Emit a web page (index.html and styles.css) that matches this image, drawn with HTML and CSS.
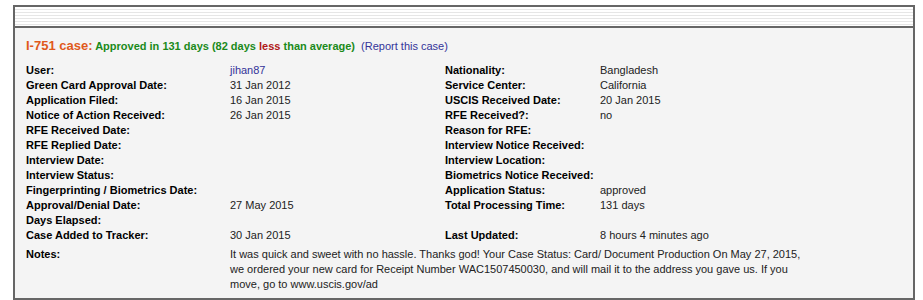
FILE: index.html
```html
<!DOCTYPE html>
<html>
<head>
<meta charset="utf-8">
<link rel="stylesheet" href="styles.css">
</head>
<body>
<div class="box">
  <div class="stripes"></div>
  <div class="content">
    <div class="title">
      <span class="case">I-751 case:</span>
      <span class="status">Approved in 131 days (82 days <span class="less">less</span> than average)</span>
      <a class="report" href="#">(Report this case)</a>
    </div>
    <div class="grid">
      <div class="lbl">User:</div><div class="val"><a class="user" href="#">jihan87</a></div>
      <div class="lbl">Nationality:</div><div class="val">Bangladesh</div>

      <div class="lbl">Green Card Approval Date:</div><div class="val">31 Jan 2012</div>
      <div class="lbl">Service Center:</div><div class="val">California</div>

      <div class="lbl">Application Filed:</div><div class="val">16 Jan 2015</div>
      <div class="lbl">USCIS Received Date:</div><div class="val">20 Jan 2015</div>

      <div class="lbl">Notice of Action Received:</div><div class="val">26 Jan 2015</div>
      <div class="lbl">RFE Received?:</div><div class="val">no</div>

      <div class="lbl">RFE Received Date:</div><div class="val"></div>
      <div class="lbl">Reason for RFE:</div><div class="val"></div>

      <div class="lbl">RFE Replied Date:</div><div class="val"></div>
      <div class="lbl">Interview Notice Received:</div><div class="val"></div>

      <div class="lbl">Interview Date:</div><div class="val"></div>
      <div class="lbl">Interview Location:</div><div class="val"></div>

      <div class="lbl">Interview Status:</div><div class="val"></div>
      <div class="lbl">Biometrics Notice Received:</div><div class="val"></div>

      <div class="lbl">Fingerprinting / Biometrics Date:</div><div class="val"></div>
      <div class="lbl">Application Status:</div><div class="val">approved</div>

      <div class="lbl">Approval/Denial Date:</div><div class="val">27 May 2015</div>
      <div class="lbl">Total Processing Time:</div><div class="val">131 days</div>

      <div class="lbl">Days Elapsed:</div><div class="val"></div>
      <div class="lbl"></div><div class="val"></div>

      <div class="lbl">Case Added to Tracker:</div><div class="val">30 Jan 2015</div>
      <div class="lbl">Last Updated:</div><div class="val">8 hours 4 minutes ago</div>

      <div class="lbl notes-lbl">Notes:</div>
      <div class="val notes">It was quick and sweet with no hassle. Thanks god! Your Case Status: Card/ Document Production On May 27, 2015, we ordered your new card for Receipt Number WAC1507450030, and will mail it to the address you gave us. If you move, go to www.uscis.gov/ad</div>
    </div>
  </div>
</div>
</body>
</html>
```
FILE: styles.css
```css
html, body {
  margin: 0;
  padding: 0;
  background: #ffffff;
}
body {
  font-family: "Liberation Sans", Arial, sans-serif;
  font-size: 11px;
  color: #222;
}
.box {
  margin: 5px 0 0 13px;
  width: 898px;
  height: 291px;
  border: 2px solid #666;
  background: #f4f4f4;
  overflow: hidden;
}
.stripes {
  height: 19px;
  border-bottom: 2px solid #666;
  background: repeating-linear-gradient(to bottom, #ffffff 0px, #ffffff 2px, #e6e6e6 2px, #e6e6e6 3px);
}
.content {
  padding: 10px 0 0 11px;
}
.title {
  line-height: 16px;
  height: 16px;
  font-weight: bold;
  margin-bottom: 9px;
}
.case {
  font-size: 13px;
  color: #e0591b;
}
.status {
  color: #1a8a1a;
}
.less {
  color: #b01818;
}
.report {
  font-weight: normal;
  color: #333399;
  text-decoration: none;
  margin-left: 3px;
}
.grid {
  display: grid;
  grid-template-columns: 204px 215px 155px 1fr;
  grid-auto-rows: 15px;
  line-height: 15px;
}
.lbl {
  font-weight: bold;
  color: #000;
  white-space: nowrap;
}
.val {
  color: #222;
  white-space: nowrap;
}
.user {
  color: #333399;
  text-decoration: none;
}
.notes-lbl {
  margin-top: 4px;
}
.notes {
  grid-column: 2 / span 3;
  white-space: normal;
  width: 580px;
  margin-top: 4px;
}
```
